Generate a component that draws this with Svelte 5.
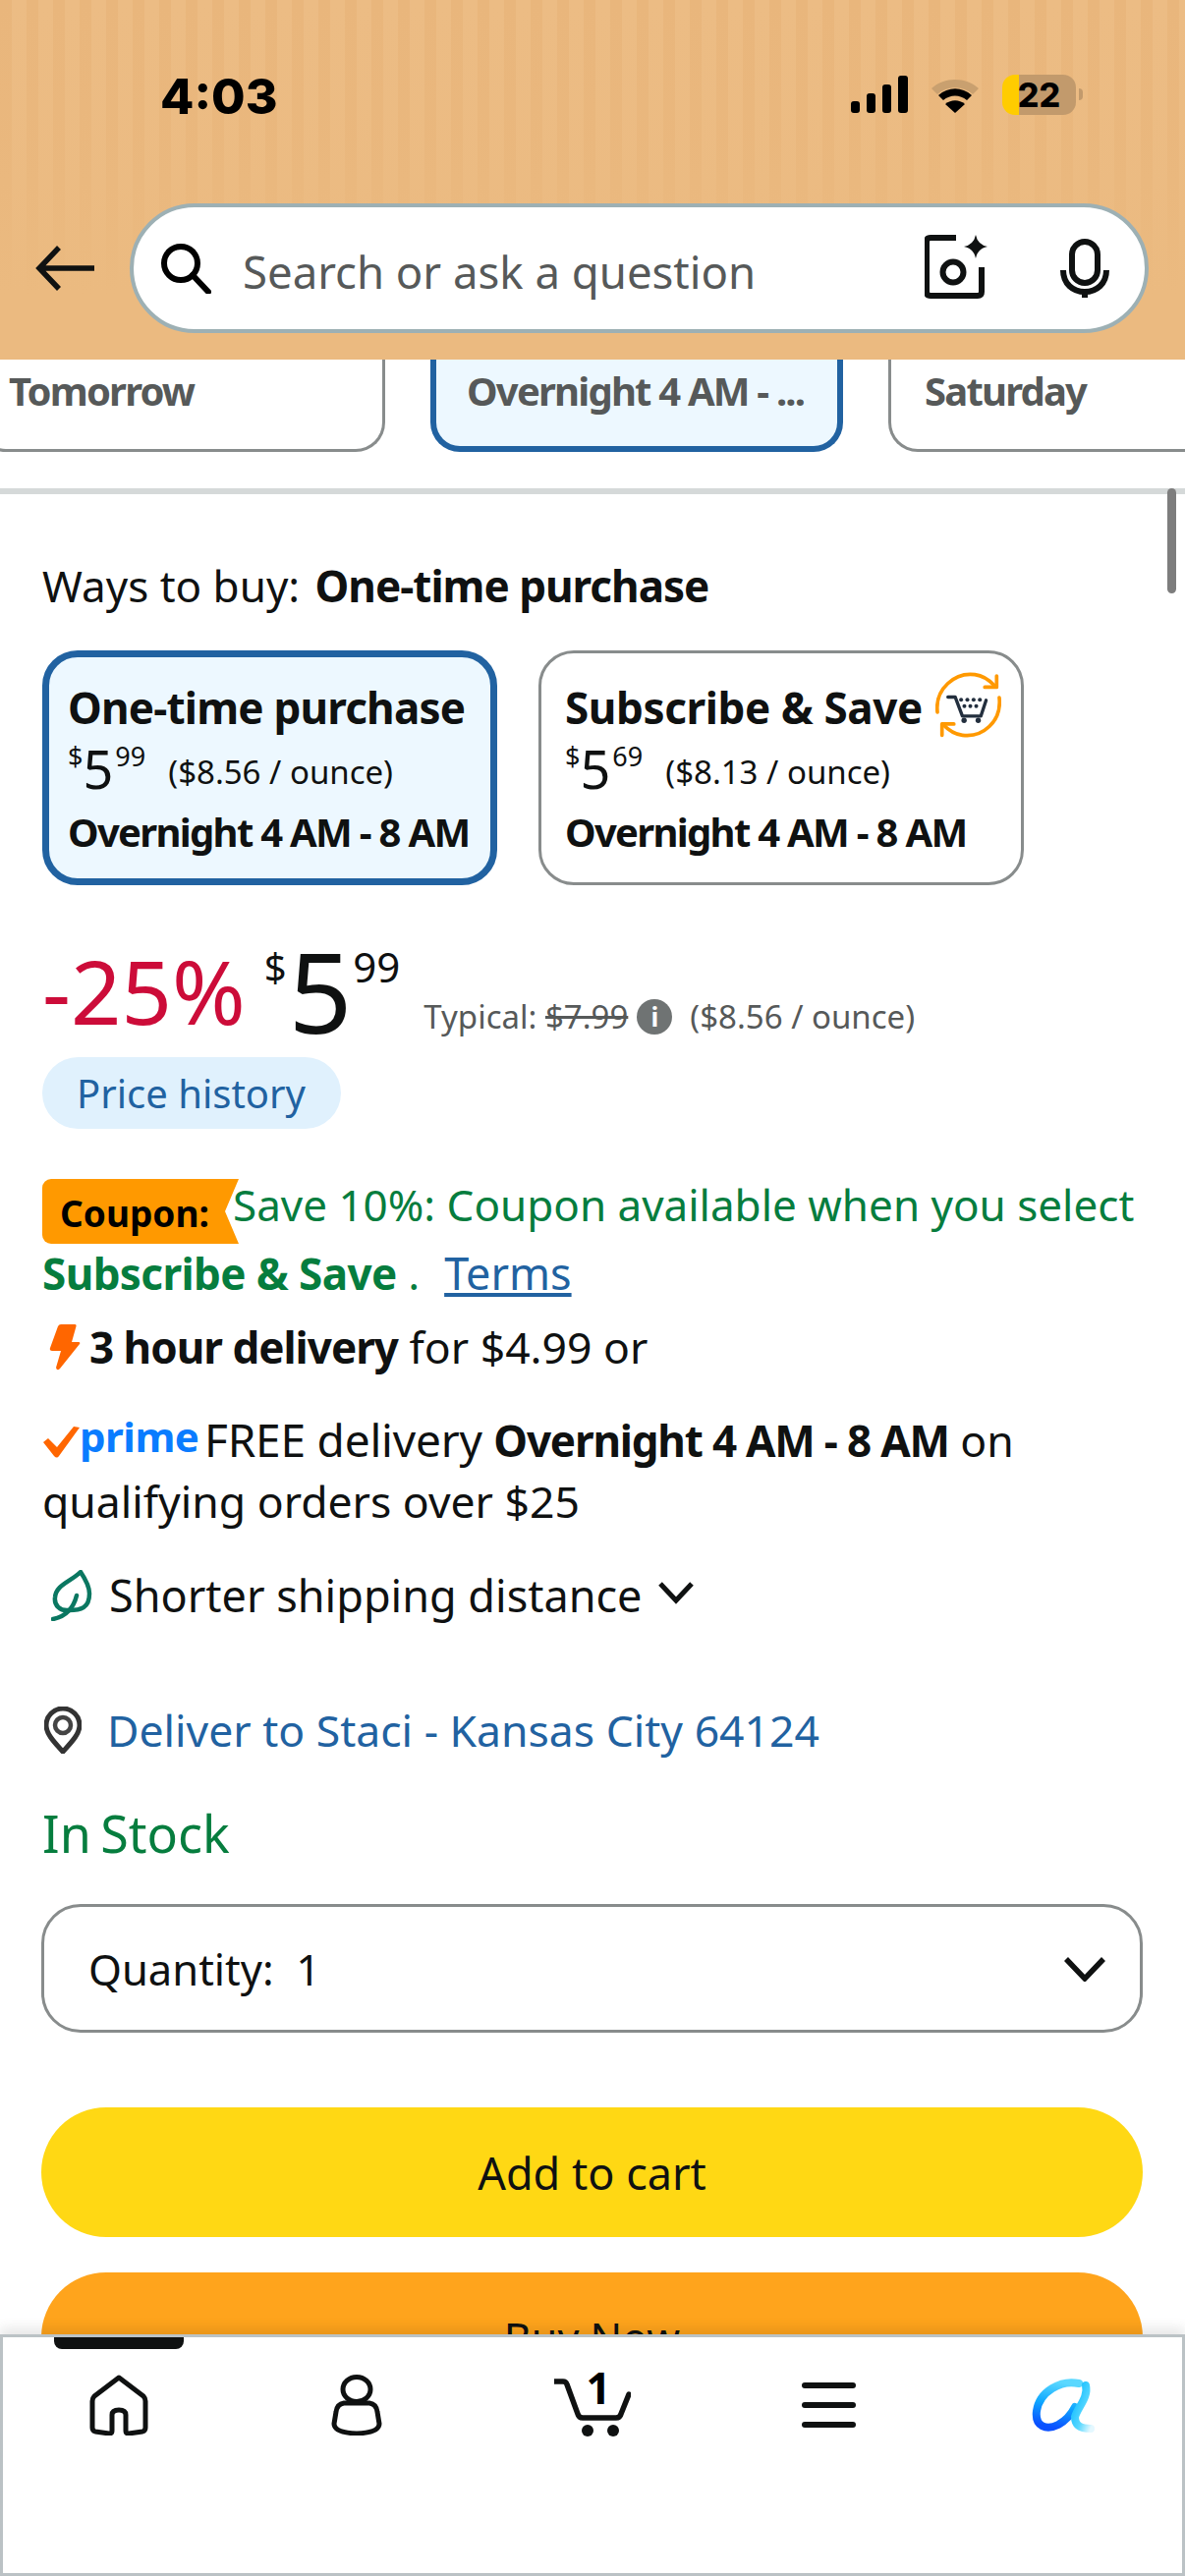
<script>
  const tabs = [
    { label: 'Tomorrow', cls: 'first' },
    { label: 'Overnight 4 AM - ...', cls: 'sel' },
    { label: 'Saturday', cls: 'last' }
  ];
</script>

<div class="page">
  <header class="head">
    <div class="status">
      <span class="time">4:03</span>
      <div class="sys">
        <svg class="sig" viewBox="0 0 58 38" width="58" height="38">
          <rect x="0" y="26" width="9" height="12" rx="3"/><rect x="16" y="18" width="9" height="20" rx="3"/><rect x="32" y="9" width="9" height="29" rx="3"/><rect x="48" y="0" width="10" height="38" rx="3"/>
        </svg>
        <svg class="wifi" viewBox="0 0 52 38" width="52" height="38">
          <path d="M2 13C15 1 37 1 50 13l-6 6C34 10 18 10 8 19z" fill="#c9a06f"/>
          <path d="M9 20c10-9 24-9 34 0l-5 5c-7-6-17-6-24 0z"/>
          <path d="M26 38l-10-9c6-5 14-5 20 0z"/>
        </svg>
        <div class="batt">22</div>
        <span class="nub"></span>
      </div>
    </div>
    <div class="searchrow">
      <svg class="back" viewBox="0 0 60 46" width="60" height="46" fill="none" stroke="#0f1111" stroke-width="5.5">
        <path d="M60 23H5M24 2L4 23l20 21"/>
      </svg>
      <div class="search">
        <svg viewBox="0 0 52 52" width="52" height="52" fill="none" stroke="#000" stroke-width="6" class="mag">
          <circle cx="21" cy="21" r="17"/><path d="M33 33l16 17" stroke-linecap="round"/>
        </svg>
        <span class="ph">Search or ask a question</span>
        <svg class="cam" viewBox="0 0 64 65" width="64" height="65">
          <path d="M32 3H6Q2 3 2 7v51q0 4 4 4h48q4 0 4-4V33" fill="none" stroke="#0f1111" stroke-width="6"/>
          <circle cx="29" cy="38" r="10.5" fill="none" stroke="#0f1111" stroke-width="6"/>
          <path d="M52 0q2 10 12 12q-10 2-12 12q-2-10-12-12q10-2 12-12z" fill="#0f1111"/>
        </svg>
        <svg class="mic" viewBox="0 0 50 60" width="50" height="60" fill="none" stroke="#0f1111" stroke-width="6">
          <rect x="12" y="3" width="26" height="42" rx="13"/>
          <path d="M3 32c0 14 10 22 22 22s22-8 22-22"/>
          <path d="M25 52v8"/>
        </svg>
      </div>
    </div>
  </header>

  <div class="tabs">
    {#each tabs as t}
      <div class="tab {t.cls}">{t.label}</div>
    {/each}
  </div>
  <div class="divider"></div>
  <div class="scroll"></div>

  <main class="body">
    <div class="ways">Ways to buy: <b>One-time purchase</b></div>

    <div class="cards">
      <div class="card on">
        <div class="ctitle">One-time purchase</div>
        <div class="cprice"><span class="ps">$</span><span class="pb">5</span><span class="ps">99</span><span class="unit">($8.56 / ounce)</span></div>
        <div class="cdel">Overnight 4 AM - 8 AM</div>
      </div>
      <div class="card off">
        <div class="ctitle tline">Subscribe &amp; Save
          <svg class="sns" viewBox="0 0 200 200" width="67" height="67">
            <g fill="none" stroke="#ff9900" stroke-width="11" stroke-linecap="round" stroke-linejoin="round">
              <path d="M6 122C-2 50 60 0 120 8c25 3 45 18 60 34"/>
              <path d="M186 12v34h-36"/>
              <path d="M194 78c8 72-50 122-112 114c-25-3-45-18-60-34"/>
              <path d="M20 192v-34h36"/>
            </g>
            <path d="M38 76H60L82 134H138L154 86" fill="none" stroke="#232f3e" stroke-width="10" stroke-linecap="round" stroke-linejoin="round"/>
            <g fill="#232f3e">
              <circle cx="78" cy="84" r="6"/><circle cx="97" cy="84" r="6"/><circle cx="116" cy="84" r="6"/><circle cx="135" cy="84" r="6"/>
              <circle cx="88" cy="104" r="6"/><circle cx="106" cy="104" r="6"/><circle cx="124" cy="104" r="6"/>
              <circle cx="87" cy="147" r="8"/><circle cx="130" cy="147" r="8"/>
            </g>
          </svg>
        </div>
        <div class="cprice"><span class="ps">$</span><span class="pb">5</span><span class="ps">69</span><span class="unit">($8.13 / ounce)</span></div>
        <div class="cdel">Overnight 4 AM - 8 AM</div>
      </div>
    </div>

    <div class="price">
      <span class="pct">-25%</span>
      <span class="cur">$</span><span class="big">5</span><span class="cents">99</span>
      <span class="typ">Typical: <s>$7.99</s></span>
      <span class="info">i</span>
      <span class="typ per">($8.56 / ounce)</span>
    </div>

    <div class="hist">Price history</div>

    <div class="coupon">
      <span class="badge">Coupon:</span>
      <span class="save">Save 10%: Coupon available when you select</span>
    </div>
    <div class="sub"><b>Subscribe &amp; Save</b> .<a href="#terms">Terms</a></div>

    <div class="three">
      <svg viewBox="0 0 32 48" width="32" height="48"><path d="M12 1h14q2 0 1.500 2L23 19h7q2 0 1 2L11 46q-3 3-4-1l5-17H3q-3 0-2-3L9 3q1-2 3-2z" fill="#ff6600"/></svg>
      <span><b>3 hour delivery</b> for $4.99 or</span>
    </div>

    <p class="prime">
      <svg viewBox="0 0 38 34" width="38" height="34"><path d="M1 17l5-4 9 9L32 1l6 1-21 29q-2 3-5 0z" fill="#ff6600"/></svg><span class="pr">prime</span> <span class="free">FREE delivery</span> <b>Overnight 4 AM - 8 AM</b> on qualifying orders over $25
    </p>

    <div class="short">
      <svg viewBox="0 0 42 52" width="42" height="52" fill="none" stroke="#0a7761" stroke-width="4.5" stroke-linecap="round" stroke-linejoin="round">
        <path d="M30 2C20 12 5 15 4 28c-1 8 5 14 14 13c12 0 21-2 21-17c0-8-5-16-9-22z"/>
        <path d="M2 50c10-2 20-8 24-24"/>
      </svg>
      <span>Shorter shipping distance</span>
      <svg class="chev" viewBox="0 0 36 24" width="36" height="24" fill="none" stroke="#0f1111" stroke-width="5"><path d="M2 3l16 17L34 3"/></svg>
    </div>

    <div class="deliver">
      <svg viewBox="0 0 38 48" width="38" height="48">
        <path d="M19 46C8 34 2 27 2 19a17 17 0 0 1 34 0c0 8-6 15-17 27z" fill="#fff" stroke="#333" stroke-width="5"/>
        <circle cx="19" cy="19" r="8" fill="#fff" stroke="#444" stroke-width="4.500"/>
      </svg>
      <span>Deliver to Staci - Kansas City 64124</span>
    </div>

    <div class="stock">In Stock</div>

    <div class="qty">
      <span>Quantity: &nbsp;1</span>
      <svg viewBox="0 0 42 26" width="42" height="26" fill="none" stroke="#0f1111" stroke-width="5.500"><path d="M2 3l19 20L40 3"/></svg>
    </div>

    <div class="btn add">Add to cart</div>
    <div class="btn buy">Buy Now</div>
  </main>

  <nav class="nav">
    <span class="ind"></span>
    <div class="cell">
      <svg class="home" viewBox="0 0 60 62" width="60" height="62" fill="none" stroke="#0f1111" stroke-width="5" stroke-linejoin="round">
        <path d="M30 3L5 22q-2 2-2 5v27q0 3 3 4l14 2q3 0 3-3V41q0-5 7-5t7 5v16q0 3 3 3l14-2q3-1 3-4V27q0-3-2-5z"/>
      </svg>
    </div>
    <div class="cell">
      <svg viewBox="0 0 52 62" width="52" height="62" fill="none" stroke="#0f1111" stroke-width="5">
        <ellipse cx="26" cy="15" rx="14" ry="12.500"/>
        <path d="M13 29h26q7 1 8 9l2 12q0 9-23 10Q3 59 3 50l2-12q1-8 8-9z"/>
      </svg>
    </div>
    <div class="cell">
      <svg class="cart" viewBox="0 0 78 66" width="78" height="66">
        <path d="M1 9h8q3 0 4 3l11 30q1 4 5 4h34q4 0 5-4l8-20" fill="none" stroke="#0f1111" stroke-width="5.500" stroke-linecap="round"/>
        <circle cx="34" cy="59" r="6" fill="#0f1111"/><circle cx="60" cy="59" r="6" fill="#0f1111"/>
        <text x="45" y="32" text-anchor="middle" class="cnt">1</text>
      </svg>
    </div>
    <div class="cell">
      <div class="menu"><i></i><i></i><i></i></div>
    </div>
    <div class="cell">
      <svg viewBox="0 0 66 56" width="66" height="56" fill="none" stroke-width="8" stroke-linecap="round">
        <defs>
          <linearGradient id="a1" x1="0.6" y1="0" x2="0.4" y2="1"><stop offset="0" stop-color="#5ad8ff"/><stop offset=".5" stop-color="#0fa8ff"/><stop offset="1" stop-color="#0a50ff"/></linearGradient>
          <linearGradient id="a2" x1="0" y1="0" x2="1" y2="1"><stop offset="0" stop-color="#08b8ff"/><stop offset=".6" stop-color="#58d8ff"/><stop offset="1" stop-color="#e4f8ff"/></linearGradient>
        </defs>
        <path d="M48 6C30 2 8 14 5 34c-2 16 10 20 22 14c9-5 14-12 17-18" stroke="url(#a1)"/>
        <path d="M55 8c3 12-8 22-11 32c0 10 7 12 16 12" stroke="url(#a2)"/>
      </svg>
    </div>
  </nav>
</div>

<style>
  :global(body) { margin: 0; background: #fff; }
  .page {
    position: relative; width: 1206px; height: 2622px; overflow: hidden; background: #fff;
    font-family: "Noto Sans", sans-serif; color: #0f1111; font-size: 44.5px;
  }
  b { letter-spacing: -1px; font-size: 44px; }
  .head {
    height: 366px; box-sizing: border-box;
    background:
      linear-gradient(to bottom, rgba(235,186,128,0) 0, rgba(235,186,128,.35) 150px, #ebba80 300px),
      repeating-linear-gradient(to right, #e9b67c 0, #e9b67c 12px, #ecbc84 12px, #ecbc84 27px);
  }
  .status { height: 207px; box-sizing: border-box; padding: 70px 104px 0 163px; display: flex; justify-content: space-between; align-items: flex-start; }
  .time { font-family: Inter, sans-serif; font-weight: 800; font-size: 50px; line-height: 56px; color: #000; }
  .sys { display: flex; align-items: center; gap: 22px; height: 52px; position: relative; }
  .batt { width: 75px; height: 41px; border-radius: 13px; background: linear-gradient(to right, #ffcc00 23%, #c29a6c 23%); font-family: Inter, sans-serif; font-weight: 800; font-size: 34px; line-height: 41px; text-align: center; color: #000; }
  .nub { width: 4px; height: 12px; background: #c29a6c; border-radius: 0 6px 6px 0; margin-left: -19px; }
  .searchrow { display: flex; align-items: center; padding-left: 36px; }
  .back { margin-right: 36px; flex: none; }
  .search {
    width: 1037px; height: 132px; box-sizing: border-box; border: 4px solid #9db0b4; border-radius: 66px; background: #fff;
    display: flex; align-items: center; padding-left: 27px;
  }
  .ph { margin-left: 32px; color: #565959; flex: 1; font-size: 45.5px; line-height: 60px; margin-top: 6px; }
  .cam { margin-right: 74px; margin-top: -4px; }
  .mic { margin-right: 36px; }
  .tabs { display: flex; gap: 46px; height: 94px; margin-left: -24px; overflow: hidden; }
  .tab { box-sizing: border-box; height: 94px; border: 3px solid #888c8c; border-top: 0; border-radius: 0 0 30px 30px; padding: 10px 0 0 30px; font-weight: 700; font-size: 40px; letter-spacing: -1.8px; line-height: 44px; color: #565959; flex: none; white-space: nowrap; }
  .first { width: 416px; }
  .sel { width: 420px; border: 6px solid #2162a1; border-top: 0; background: #edf8ff; padding-left: 31px; }
  .last { width: 420px; padding-left: 34px; }
  .divider { height: 6px; margin-top: 37px; background: #d5d9d9; }
  .scroll { position: absolute; left: 1188px; top: 497px; width: 9px; height: 107px; background: #7d7d7d; border-radius: 5px; }
  .body { padding: 0 43px; }
  .ways { margin-top: 63px; line-height: 60px; font-size: 44px; }
  .ways b { margin-left: 4px; }
  .cards { display: flex; gap: 42px; margin-top: 36px; }
  .card { box-sizing: border-box; height: 239px; border-radius: 36px; padding: 0; }
  .on { width: 463px; border: 7px solid #2162a1; background: #edf8ff; padding: 26px 0 0 19px; }
  .off { width: 494px; border: 3px solid #888c8c; padding: 30px 0 0 24px; position: relative; }
  .ctitle { font-weight: 700; line-height: 50px; font-size: 44px; letter-spacing: -.8px; }
  .tline { letter-spacing: -.4px; }
  .sns { position: absolute; left: 401px; top: 19px; }
  .cprice { display: flex; align-items: flex-start; margin-top: 7px; height: 60px; }
  .ps { font-size: 27px; line-height: 36px; margin-top: 0; }
  .pb { font-size: 54px; line-height: 60px; }
  .ps + .pb + .ps { margin-left: 2px; }
  .unit { font-size: 33px; line-height: 60px; margin-left: 23px; margin-top: 4px; }
  .cdel { font-weight: 700; font-size: 40px; line-height: 48px; margin-top: 11px; letter-spacing: -1.7px; }

  .price { display: flex; align-items: flex-start; margin-top: 52px; height: 123px; }
  .pct { color: #cc0c39; font-size: 90px; line-height: 110px; }
  .cur { font-size: 40px; line-height: 50px; margin-left: 19px; margin-top: 6px; }
  .big { font-size: 113px; line-height: 130px; margin-left: 2px; margin-top: -10px; }
  .cents { font-size: 42px; line-height: 50px; margin-top: 6px; margin-left: 1px; }
  .typ { font-size: 33px; line-height: 44px; color: #565959; margin-left: 24px; margin-top: 60px; }
  .info { width: 36px; height: 36px; border-radius: 50%; background: #6f7373; color: #fff; font-size: 26px; font-weight: 700; line-height: 36px; text-align: center; margin: 64px 0 0 9px; }
  .per { margin-left: 18px; }

  .hist { display: inline-block; height: 73px; width: 304px; box-sizing: border-box; padding-left: 35px; line-height: 73px; font-size: 40px; background: #e0f1fd; color: #2162a1; border-radius: 37px; }

  .coupon { display: flex; align-items: flex-start; margin-top: 51px; }
  .badge { box-sizing: border-box; width: 200px; height: 66px; padding-left: 18px; line-height: 70px; font-weight: 700; font-size: 37px; color: #000; background: #ff9900; border-radius: 9px 0 0 9px; clip-path: polygon(0 0, 100% 0, 93% 50%, 100% 100%, 0 100%); flex: none; }
  .save { color: #067d3e; line-height: 52px; font-size: 44px; margin-left: -6px; white-space: nowrap; }
  .sub { color: #067d3e; line-height: 52px; margin-top: 4px; }
  .sub b { letter-spacing: -.6px; }
  .sub a { color: #2162a1; margin-left: 25px; font-size: 45px; }

  .three { display: flex; align-items: center; margin-top: 23px; line-height: 52px; gap: 9px; padding-left: 7px; }
  .prime { margin: 37px 0 0; line-height: 62px; }
  .prime b { letter-spacing: -1.2px; }
  .free { font-size: 46px; letter-spacing: -.2px; }
  .prime svg { vertical-align: -2px; }
  .pr { font-weight: 700; color: #0a7cff; font-size: 42px; letter-spacing: -.5px; vertical-align: 5px; line-height: 0; margin-right: -6px; }

  .short { display: flex; align-items: center; margin-top: 35px; line-height: 60px; padding-left: 9px; font-size: 45px; }
  .short span { margin-left: 17px; }
  .chev { margin-left: 17px; margin-top: -6px; }
  .deliver { display: flex; align-items: center; margin-top: 77px; line-height: 60px; color: #2162a1; padding-left: 2px; }
  .deliver span { margin-left: 26px; }
  .stock { color: #067d3e; font-size: 52px; word-spacing: -4px; line-height: 70px; margin-top: 40px; }
  .qty { box-sizing: border-box; height: 131px; margin: 37px 0 0 -1px; border: 3px solid #888c8c; border-radius: 40px; display: flex; align-items: center; justify-content: space-between; padding: 0 35px 0 45px; font-size: 43.5px; }
  .btn { height: 132px; margin-left: -1px; border-radius: 66px; display: flex; align-items: center; justify-content: center; font-size: 45px; }
  .add { background: #ffd814; margin-top: 76px; }
  .buy { background: #ffa41c; margin-top: 36px; font-size: 43px; }

  .nav {
    position: absolute; left: 0; top: 2376px; width: 1206px; height: 246px; box-sizing: border-box;
    border: 3px solid #bbc2c5; background: #fff; padding-top: 36px;
    display: grid; grid-template-columns: repeat(5, 1fr); grid-template-rows: 66px; align-items: center; justify-items: center;
    box-shadow: 0 -6px 12px rgba(0,0,0,.1);
  }
  .ind { position: absolute; left: 52px; top: 0; width: 132px; height: 12px; background: #0f1111; border-radius: 0 0 8px 8px; }
  .home { margin-left: -5px; }
  .cell { display: flex; align-items: center; justify-content: center; }
  .cnt { font-size: 44px; font-weight: 700; fill: #000; font-family: "Noto Sans", sans-serif; }
  .menu { display: flex; flex-direction: column; gap: 14px; width: 55px; }
  .menu i { display: block; height: 6px; background: #0f1111; border-radius: 3px; }
</style>
